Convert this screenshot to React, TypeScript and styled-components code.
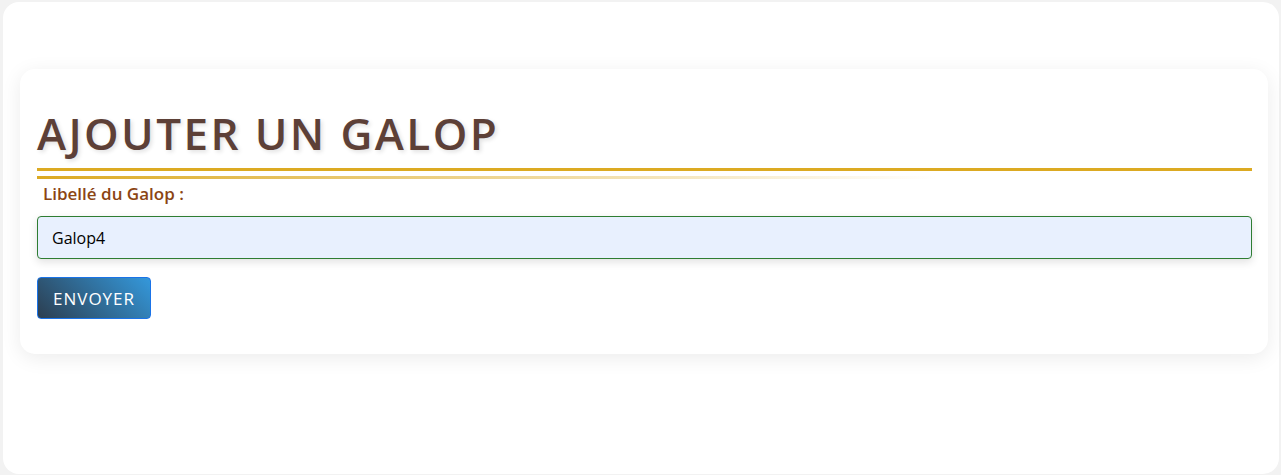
import React from "react";
import styled, { createGlobalStyle } from "styled-components";

const Global = createGlobalStyle`
  html, body { margin: 0; padding: 0; }
  body {
    background: #f2f2f2;
    font-family: "Open Sans", "Noto Sans", sans-serif;
  }
  * { box-sizing: border-box; }
`;

const Page = styled.div`
  margin: 2px 2px 1px 3px;
  height: 472px;
  background: #ffffff;
  border-radius: 16px;
  padding: 67px 11px 0 17px;
`;

const Card = styled.section`
  background: #ffffff;
  border-radius: 15px;
  box-shadow: 0 4px 20px rgba(0, 0, 0, 0.08);
  padding: 20px 16px 35px 17px;
`;

const Title = styled.h2`
  margin: 0;
  padding: 16px 0 7px;
  font-family: "Open Sans", "Noto Sans", sans-serif;
  font-weight: 600;
  font-size: 44px;
  line-height: 56px;
  letter-spacing: 2.4px;
  color: #5d4037;
  text-shadow: 2px 2px 4px rgba(0, 0, 0, 0.12);
  border-bottom: 3px solid #dcaa22;
`;

const GradientRule = styled.div`
  margin-top: 5px;
  height: 3px;
  width: 900px;
  background: linear-gradient(to right, #dcaa22, rgba(220, 170, 34, 0));
`;

const Form = styled.form`
  display: flex;
  flex-direction: column;
  align-items: flex-start;
`;

const Label = styled.label`
  margin: 3px 0 0 6px;
  font-family: "Open Sans", "Noto Sans", sans-serif;
  font-weight: 600;
  font-size: 17px;
  line-height: 24px;
  color: #8b4513;
`;

const Input = styled.input`
  margin-top: 10px;
  width: 100%;
  height: 43px;
  padding: 0 14px;
  font-family: "Open Sans", "Noto Sans", sans-serif;
  font-size: 16px;
  color: #000;
  background: #e8f0fe;
  border: 1px solid #2e7d32;
  border-radius: 4px;
  box-shadow: 0 3px 8px rgba(0, 0, 0, 0.12);
  outline: none;
`;

const Button = styled.button`
  margin-top: 18px;
  height: 42px;
  padding: 0 15px;
  font-family: "Open Sans", "Noto Sans", sans-serif;
  font-size: 17px;
  letter-spacing: 1px;
  color: #ffffff;
  background: linear-gradient(45deg, #2c3e50, #3498db);
  border: 1px solid #1a73e8;
  border-radius: 4px;
  cursor: pointer;
`;

export default function App() {
  return (
    <>
      <Global />
      <Page>
        <Card>
          <Title>AJOUTER UN GALOP</Title>
          <GradientRule />
          <Form onSubmit={(e) => e.preventDefault()}>
            <Label htmlFor="libelle">Libellé du Galop :</Label>
            <Input id="libelle" defaultValue="Galop4" />
            <Button type="submit">ENVOYER</Button>
          </Form>
        </Card>
      </Page>
    </>
  );
}
